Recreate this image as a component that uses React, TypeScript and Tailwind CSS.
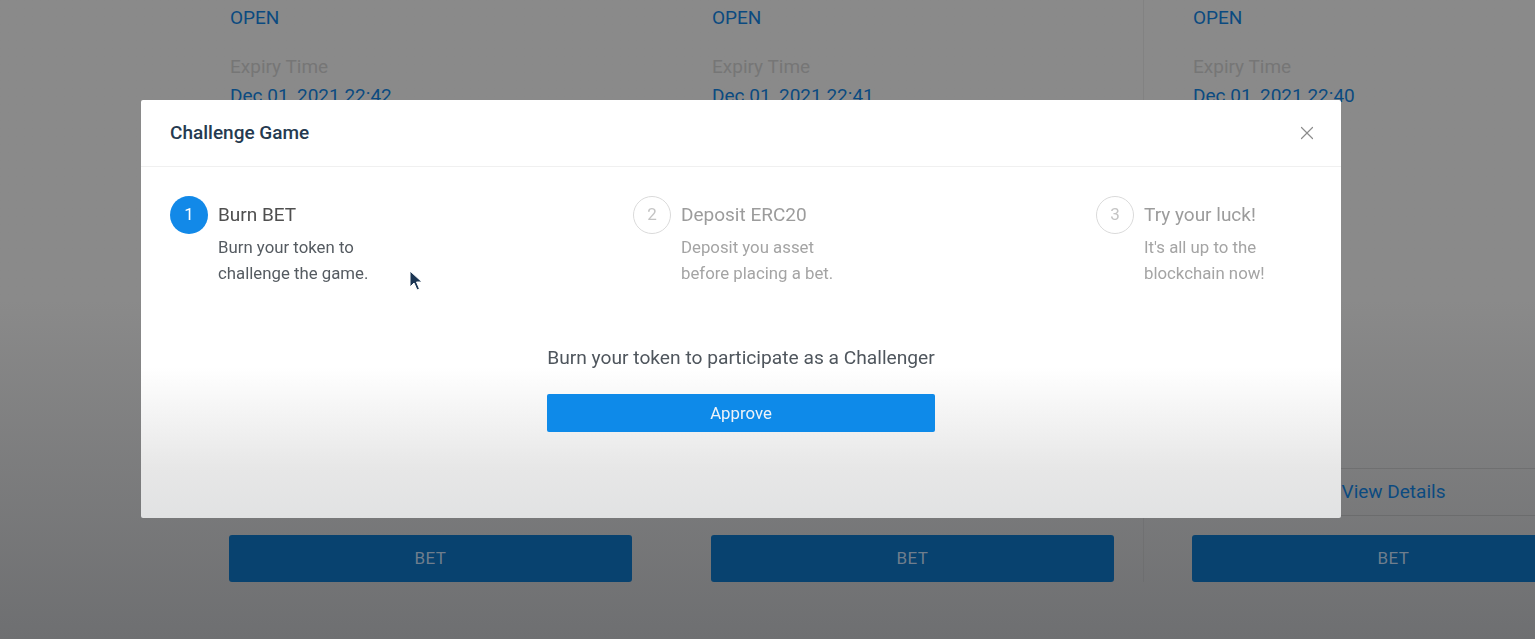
import { X } from 'lucide-react';

const games = [
  { expiry: 'Dec 01, 2021 22:42' },
  { expiry: 'Dec 01, 2021 22:41' },
  { expiry: 'Dec 01, 2021 22:40' },
];

const steps = [
  { n: 1, title: 'Burn BET', desc: 'Burn your token to challenge the game.', active: true },
  { n: 2, title: 'Deposit ERC20', desc: 'Deposit you asset before placing a bet.', active: false },
  { n: 3, title: 'Try your luck!', desc: "It's all up to the blockchain now!", active: false },
];

const GameCard = ({ expiry, divider }: { expiry: string; divider: boolean }) => (
  <div className={`w-[482px] shrink-0 pt-[4px] ${divider ? 'border-l border-black/5 pl-[48px]' : 'pl-[50px]'}`}>
    <div className="w-[403px]">
      <div className="pl-px text-[19px] leading-[27px] text-[#0b4a80]">OPEN</div>
      <div className="mt-[21px] pl-px text-[19px] leading-[29px] text-[#767676]">Expiry Time</div>
      <div className="pl-px text-[19px] leading-[29px] text-[#0b4a80]">{expiry}</div>
      <div className="h-[358px]" />
      <div className="flex h-[48px] items-center justify-center border-y border-black/10 text-[19px] text-[#0b4a80]">
        View Details
      </div>
      <button className="mt-[19px] h-[47px] w-full rounded-[3px] bg-[#08426f] text-[17px] tracking-wide text-[#6f7e8d]">
        BET
      </button>
    </div>
  </div>
);

const Step = ({ n, title, desc, active, last }: { n: number; title: string; desc: string; active: boolean; last: boolean }) => (
  <div className={`flex ${last ? 'flex-none' : 'w-[463px] shrink-0'}`}>
    <div
      className={`flex h-[38px] w-[38px] shrink-0 items-center justify-center rounded-full text-[17px] ${
        active ? 'bg-[#1289e8] text-white' : 'border border-[#dadada] text-[#c4c4c4]'
      }`}
    >
      {n}
    </div>
    <div className="ml-[10px]">
      <div className={`text-[19px] leading-[38px] ${active ? 'text-[#4f4f4f]' : 'text-[#9c9c9c]'}`}>{title}</div>
      <div className={`max-w-[168px] text-[16.8px] leading-[26.4px] ${active ? 'text-[#555b61]' : 'text-[#a4a4a4]'}`}>
        {desc}
      </div>
    </div>
  </div>
);

export default function App() {
  return (
    <div className="relative h-[639px] w-full overflow-hidden bg-linear-to-b from-[#8a8a8a] from-[47%] to-[#6e6f71] font-['Roboto',sans-serif]">
      {/* Background game cards */}
      <div className="flex pl-[179px]">
        {games.map((g, i) => (
          <GameCard key={g.expiry} expiry={g.expiry} divider={i === 2} />
        ))}
      </div>

      {/* Modal */}
      <div className="fixed left-[141px] top-[100px] flex h-[418px] w-[1200px] flex-col rounded-[2px] bg-linear-to-b from-white from-[64%] via-[#e7e7e7] via-[88%] to-[#e1e2e3]">
        <div className="flex h-[67px] shrink-0 items-center justify-between border-b border-[#f0f0f0] pl-[29px] pr-[23px]">
          <span className="text-[19px] font-medium text-[#253a50]">Challenge Game</span>
          <X size={22} strokeWidth={1.3} className="text-[#8c8c8c]" />
        </div>
        <div className="px-[29px] pt-[29px]">
          <div className="flex">
            {steps.map((s, i) => (
              <Step key={s.n} {...s} last={i === steps.length - 1} />
            ))}
          </div>
          <div className="mt-[58px] flex justify-center">
            <div className="inline-flex flex-col">
              <div className="text-[19.2px] leading-[26.4px] text-[#4f565d]">Burn your token to participate as a Challenger</div>
              <button className="mt-[23px] h-[38px] w-full rounded-[2px] bg-[#0e8ae9] text-[16.8px] text-[#eef3f8]">
                Approve
              </button>
            </div>
          </div>
        </div>
      </div>

      {/* Mouse cursor */}
      <svg className="absolute left-[409px] top-[270px]" width="14" height="22" viewBox="0 0 14 22">
        <path d="M1 1 L1 17 L5 13 L8 20 L10.5 19 L7.5 12 L13 12 Z" fill="#1b3553" stroke="#ffffff" strokeWidth="1" />
      </svg>
    </div>
  );
}
